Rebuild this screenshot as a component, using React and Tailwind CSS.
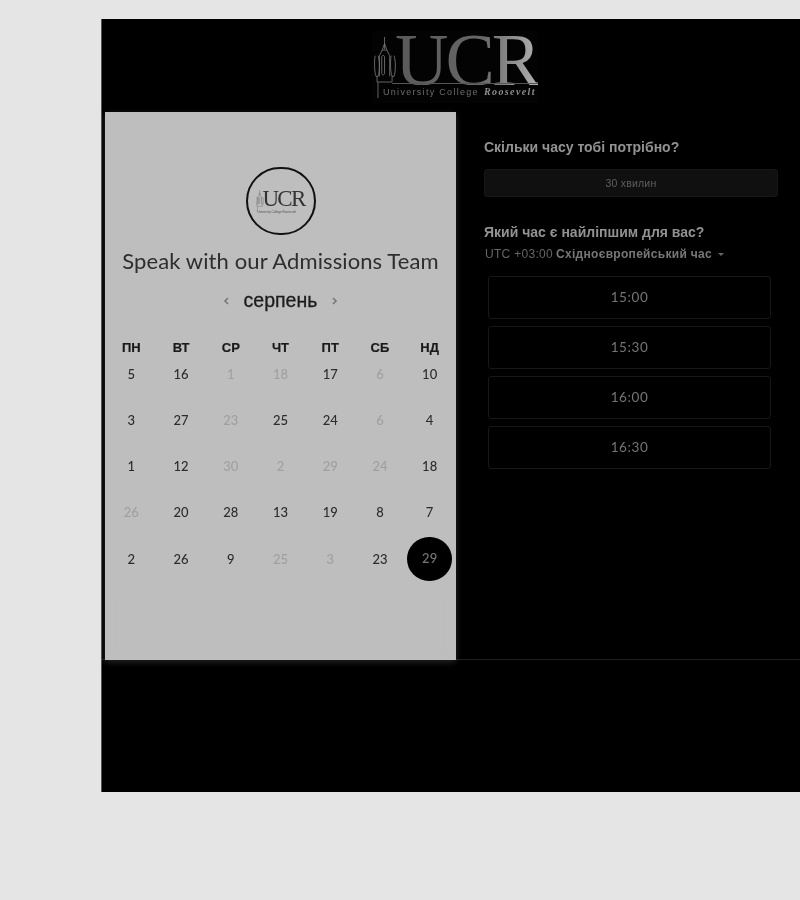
const weekdays = ["ПН", "ВТ", "СР", "ЧТ", "ПТ", "СБ", "НД"];
const rows = [
  [["5", 1], ["16", 1], ["1", 0], ["18", 0], ["17", 1], ["6", 0], ["10", 1]],
  [["3", 1], ["27", 1], ["23", 0], ["25", 1], ["24", 1], ["6", 0], ["4", 1]],
  [["1", 1], ["12", 1], ["30", 0], ["2", 0], ["29", 0], ["24", 0], ["18", 1]],
  [["26", 0], ["20", 1], ["28", 1], ["13", 1], ["19", 1], ["8", 1], ["7", 1]],
  [["2", 1], ["26", 1], ["9", 1], ["25", 0], ["3", 0], ["23", 1], ["29", 2]],
];
const times = ["15:00", "15:30", "16:00", "16:30"];

function Tower({ className, stroke = "#777" }) {
  return (
    <svg viewBox="0 0 24 66" className={className} fill="none" stroke={stroke} strokeWidth="0.9">
      <path d="M11 1v13M11 8l-2.5 7h5L11 8z" />
      <path d="M8.5 15l-3 6v22M13.5 15l3 6v22" />
      <path d="M1 21c-1 4-1 18 1 22h2c2-4 2-18 0-22M18 21c-1 4-1 18 1 22h2c2-4 2-18 0-22" />
      <path d="M8 22v18c1 2 2 2 3 0V22c-1-2-2-2-3 0z" />
      <path d="M3 43v6h16M19 43v6M4 49v17" />
    </svg>
  );
}

function HeaderLogo() {
  return (
    <div className="relative w-[166px] h-[72px] bg-[#030303]">
      <Tower className="absolute left-[2px] top-[5px] w-[23px] h-[62px]" />
      <div className="absolute left-[23px] top-[4px] font-['Liberation_Serif',serif] text-[74px] leading-[50px] tracking-[-3px] bg-gradient-to-r from-[#5a5a5a] via-[#666666] via-60% to-[#b0b0b0] bg-clip-text text-transparent whitespace-nowrap">
        UCR
      </div>
      <div className="absolute left-[20px] right-0 top-[52px] h-px bg-[#555]" />
      <div className="absolute left-[11px] top-[56px] flex items-baseline gap-[5px] whitespace-nowrap">
        <span className="font-['Liberation_Sans',sans-serif] text-[9px] leading-[10px] tracking-[1.3px] text-[#6e6e6e]">University College</span>
        <span className="font-['Liberation_Serif',serif] italic font-bold text-[10px] leading-[10px] tracking-[1.4px] text-[#8e8e8e]">Roosevelt</span>
      </div>
    </div>
  );
}

function RoundLogo() {
  return (
    <div className="relative w-[70px] h-[68px] rounded-full border-[2px] border-[#111] flex items-center justify-center">
      <Tower className="absolute left-[8px] top-[21px] w-[8px] h-[22px]" stroke="#555" />
      <div className="ml-[6px] mt-[-4px] font-['Liberation_Serif',serif] text-[23px] leading-[26px] tracking-[-1.8px] text-[#333333]">UCR</div>
      <div className="absolute left-[10px] top-[41px] font-['Liberation_Sans',sans-serif] text-[3px] leading-[4px] text-[#555] whitespace-nowrap">University College Roosevelt</div>
    </div>
  );
}

function DayCell({ label, kind }) {
  if (kind === 2) {
    return (
      <div className="relative flex items-center justify-center h-[23px]">
        <div className="absolute left-[2px] top-[-11px] w-[45px] h-[44px] rounded-full bg-black" />
        <span className="relative mt-[-2px] text-[#777777]">{label}</span>
      </div>
    );
  }
  return (
    <div className={`flex items-center justify-center h-[23px] ${kind === 1 ? "text-[#2c2c2c]" : "text-[#a0a0a0]"}`}>
      {label}
    </div>
  );
}

export default function App() {
  return (
    <div className="w-[800px] h-[900px] overflow-hidden bg-[#e5e5e5] pt-[19px] pl-[101px]">
      <div className="w-[699px] h-[773px] bg-black border-l border-[#555] flex flex-col blur-[0.35px]">
        <header className="h-[93px] flex justify-center items-start pt-[12px] pl-[8px] shrink-0">
          <HeaderLogo />
        </header>
        <main className="flex h-[548px] border-b border-[#1f1f1f] shrink-0">
          <section className="ml-[3px] w-[351px] h-[548px] bg-[#bebebe] flex flex-col items-center shrink-0 shadow-[0_2px_6px_rgba(255,255,255,0.15)]">
            <div className="mt-[55px]">
              <RoundLogo />
            </div>
            <h2 className="mt-[11px] font-['Lato',sans-serif] text-[22px] leading-[30px] tracking-[0.1px] text-[#2e2e2e] whitespace-nowrap">
              Speak with our Admissions Team
            </h2>
            <div className="mt-[10px] flex items-center h-[30px] font-['Liberation_Sans',sans-serif] text-[19.5px] text-[#1c1c1c] [-webkit-text-stroke:0.3px_#1c1c1c]">
              <svg viewBox="0 0 10 12" className="w-[10px] h-[12px] mr-[13px]" fill="none" stroke="#777" strokeWidth="1.6"><path d="M7 3L4 6l3 3" /></svg>
              <span>серпень</span>
              <svg viewBox="0 0 10 12" className="w-[10px] h-[12px] ml-[13px]" fill="none" stroke="#777" strokeWidth="1.6"><path d="M3 3l3 3-3 3" /></svg>
            </div>
            <div className="mt-[22px] w-[348px] grid grid-cols-7 font-['Liberation_Sans',sans-serif] font-bold text-[13px] leading-[20px] text-[#1a1a1a] [-webkit-text-stroke:0.2px_#1a1a1a]">
              {weekdays.map((d) => (
                <div key={d} className="text-center">{d}</div>
              ))}
            </div>
            <div className="mt-[5px] w-[348px] flex flex-col gap-[23.2px] font-['Lato',sans-serif] text-[13px] font-medium">
              {rows.map((row, i) => (
                <div key={i} className="grid grid-cols-7">
                  {row.map(([label, kind], j) => (
                    <DayCell key={j} label={label} kind={kind} />
                  ))}
                </div>
              ))}
            </div>
            <div className="mt-[26px] w-[331px] h-[56px] bg-[#bebebe] border border-[#bcbcbc]" />
          </section>
          <section className="flex-1 pl-[28px] pt-[25px] font-['Liberation_Sans',sans-serif]">
            <h3 className="font-bold text-[14px] leading-[20px] text-[#929292]">Скільки часу тобі потрібно?</h3>
            <div className="mt-[12px] w-[294px] h-[28px] pt-px rounded-[3px] bg-[#101010] border border-[#171717] flex items-center justify-center text-[10.5px] tracking-[0.2px] text-[#5f5f5f]">
              30 хвилин
            </div>
            <h3 className="mt-[25px] font-bold text-[14px] leading-[20px] text-[#929292]">Який час є найліпшим для вас?</h3>
            <div className="mt-[2px] ml-[1px] flex items-center text-[12px] leading-[20px] tracking-[0.3px] text-[#666666]">
              <span>UTC +03:00</span>
              <span className="ml-[3px] font-bold text-[#777777]">Східноєвропейський час</span>
              <span className="ml-[6px] w-0 h-0 border-x-[3px] border-x-transparent border-t-[3px] border-t-[#666]" />
            </div>
            <div className="mt-[12px] ml-[4px] w-[283px] flex flex-col gap-[7px]">
              {times.map((t) => (
                <div key={t} className="h-[43px] rounded-[3px] border border-[#171717] flex items-center justify-center font-['Lato',sans-serif] text-[13.5px] tracking-[0.6px] text-[#757575]">
                  {t}
                </div>
              ))}
            </div>
          </section>
        </main>
      </div>
    </div>
  );
}
